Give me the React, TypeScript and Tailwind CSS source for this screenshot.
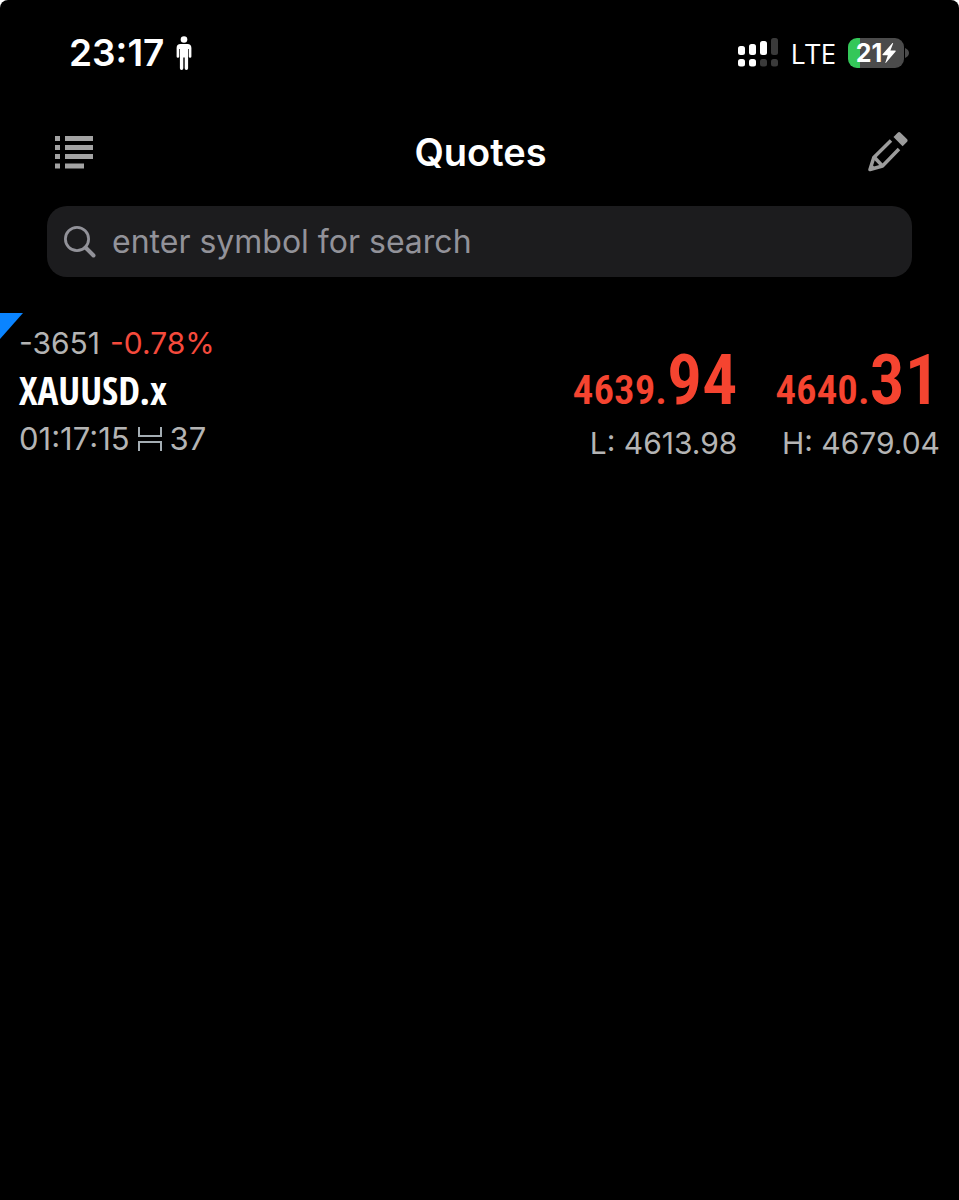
interface PriceProps {
  whole: string;
  pips: string;
  label: string;
  limit: string;
}

interface Quote {
  symbol: string;
  change: string;
  percent: string;
  time: string;
  spread: string;
  bid: PriceProps;
  ask: PriceProps;
}

const quotes: Quote[] = [
  {
    symbol: 'XAUUSD.x',
    change: '-3651',
    percent: '-0.78%',
    time: '01:17:15',
    spread: '37',
    bid: { whole: '4639.', pips: '94', label: 'L:', limit: '4613.98' },
    ask: { whole: '4640.', pips: '31', label: 'H:', limit: '4679.04' },
  },
];

function StatusBar() {
  return (
    <div className="flex h-[106px] items-center justify-between pl-[69px] pr-[50px] text-white">
      <div className="flex items-center gap-3">
        <span className="text-[37px] font-semibold">23:17</span>
        <svg width="16" height="34" viewBox="0 0 16 34" fill="currentColor" aria-hidden="true">
          <circle cx="8" cy="3.5" r="3.3" />
          <path d="M4.5 8h7C14 8 15.4 9.600 15.400 12v8.500a1.300 1.300 0 0 1-2.600 0V13h-.7v19.200a1.700 1.700 0 0 1-3.400 0V21.500H7.300v10.700a1.700 1.700 0 0 1-3.400 0V13h-.7v7.500a1.300 1.300 0 0 1-2.600 0V12C.6 9.600 2 8 4.500 8z" />
        </svg>
      </div>
      <div className="flex items-center gap-3">
        <svg width="40" height="30" viewBox="0 0 40 30" aria-hidden="true">
          <g fill="#fff">
            <rect x="0" y="8" width="7" height="9" rx="2.500" />
            <rect x="11" y="6" width="7" height="11" rx="2.500" />
            <rect x="22" y="3" width="7" height="14" rx="2.500" />
            <rect x="0" y="21" width="7" height="7.500" rx="2.500" />
            <rect x="11" y="21" width="7" height="7.500" rx="2.500" />
          </g>
          <g fill="#3a3a3a">
            <rect x="33" y="0" width="7" height="17" rx="2.500" />
            <rect x="22" y="21" width="7" height="7.500" rx="2.500" />
            <rect x="33" y="21" width="7" height="7.500" rx="2.500" />
          </g>
        </svg>
        <span className="font-['Open_Sans'] text-[28px] font-medium">LTE</span>
        <div className="flex items-center gap-px">
          <div className="flex h-[30px] w-14 items-center justify-center rounded-[9px] bg-linear-to-r from-[#34c759] from-21% to-[#4b4b4b] to-21%">
            <span className="text-[25px] leading-none font-bold">21</span>
            <svg width="14" height="20" viewBox="0 0 14 20" fill="currentColor" aria-hidden="true">
              <path d="M10.500 0 .6 11.200c-.4.500-.2 1 .4 1h4.800L3.400 19.600c-.1.400.3.500.6.200L13.600 8.600c.4-.5.200-1-.4-1H8.400L11.100.4c.1-.4-.3-.7-.6-.4z" />
            </svg>
          </div>
          <svg width="4" height="10" viewBox="0 0 4 10" fill="#4b4b4b" aria-hidden="true">
            <path d="M0 0c2.500 1 4 2.800 4 5S2.500 9 0 10z" />
          </svg>
        </div>
      </div>
    </div>
  );
}

function NavBar() {
  return (
    <header className="flex h-[92px] items-center justify-between pr-[51px] pl-[55px]">
      <button type="button" aria-label="Symbols">
        <svg width="38" height="33" viewBox="0 0 38 33" fill="#a3a3a3">
          <path d="M0 0h5v5H0zM10 0h28v5H10zM0 9h5v5H0zM10 9h28v5H10zM0 18h5v5H0zM10 18h28v5H10zM0 27.500h5v5H0zM10 27.500h19v5H10z" />
        </svg>
      </button>
      <h1 className="text-[38px] font-semibold text-white">Quotes</h1>
      <button type="button" aria-label="Edit">
        <svg width="40" height="40" viewBox="0 0 40 40" fill="none" stroke="#9c9c9c" strokeWidth="3.500">
          <path d="M23 8.500 5.800 25.500 2 37.500l12.500-3.500L31 17" strokeLinejoin="round" />
          <path d="m6.500 25.500 8 8.500" />
          <path d="M1 39 3.500 32l4 4z" fill="#9c9c9c" stroke="none" />
          <path d="m25.500 5 4.200-4.300a2 2 0 0 1 2.800 0l6.400 6.400a2 2 0 0 1 0 2.800l-4.300 4.300z" fill="#9c9c9c" stroke="none" />
        </svg>
      </button>
    </header>
  );
}

function SearchBox() {
  return (
    <label className="mx-[47px] mt-2 flex h-[71px] items-center gap-4 rounded-[20px] bg-[#1c1c1e] px-[17px]">
      <svg width="32" height="32" viewBox="0 0 32 32" fill="none" stroke="#929299" aria-hidden="true">
        <circle cx="13" cy="13" r="11.600" strokeWidth="2.800" />
        <path d="m21.500 21.500 8 8" strokeWidth="4" strokeLinecap="round" />
      </svg>
      <input
        type="text"
        aria-label="Search symbol"
        placeholder="enter symbol for search"
        className="min-w-0 flex-1 bg-transparent text-[32px] text-white outline-none placeholder:text-[#929299]"
      />
    </label>
  );
}

function Price({ whole, pips, label, limit }: PriceProps) {
  return (
    <div className="flex flex-col items-end">
      <div className="flex items-baseline font-['Roboto_Condensed','Open_Sans_Condensed',sans-serif] font-semibold text-[#f54430]">
        <span className="text-[41px] leading-none">{whole}</span>
        <span className="text-[70px] leading-none">{pips}</span>
      </div>
      <div className="mt-[10px] text-[30px] leading-9 text-[#b4b4b4]">
        {label} {limit}
      </div>
    </div>
  );
}

function QuoteRow({ quote }: { quote: Quote }) {
  return (
    <li className="relative flex justify-between px-[19px] pt-3">
      <svg width="23" height="26" viewBox="0 0 23 26" fill="#0a84ff" className="absolute top-0 left-0" aria-hidden="true">
        <path d="M0 0h23L0 26z" />
      </svg>
      <div>
        <div className="flex gap-[10px] text-[30px] leading-9 text-[#b4b4b4]">
          <span>{quote.change}</span>
          <span className="text-[#f54a3c]">{quote.percent}</span>
        </div>
        <div className="mt-[3px] font-['Open_Sans_Condensed','Roboto_Condensed',sans-serif] text-[39px] leading-[52px] font-bold text-white">
          {quote.symbol}
        </div>
        <div className="mt-[5px] flex items-center gap-2 text-[31px] leading-9 text-[#b4b4b4]">
          <span>{quote.time}</span>
          <svg width="24" height="24" viewBox="0 0 24 24" fill="none" stroke="#a4adb3" strokeWidth="2" aria-hidden="true">
            <path d="M1 0v9h22V0M1 24v-9h22v9" />
          </svg>
          <span>{quote.spread}</span>
        </div>
      </div>
      <div className="flex gap-[38px] pt-5">
        <Price {...quote.bid} />
        <Price {...quote.ask} />
      </div>
    </li>
  );
}

export default function App() {
  return (
    <div className="bg-white">
      <main className="min-h-screen rounded-t-lg bg-black font-['Inter',sans-serif]">
        <StatusBar />
        <NavBar />
        <SearchBox />
        <ul className="mt-9">
          {quotes.map((quote) => (
            <QuoteRow key={quote.symbol} quote={quote} />
          ))}
        </ul>
      </main>
    </div>
  );
}
